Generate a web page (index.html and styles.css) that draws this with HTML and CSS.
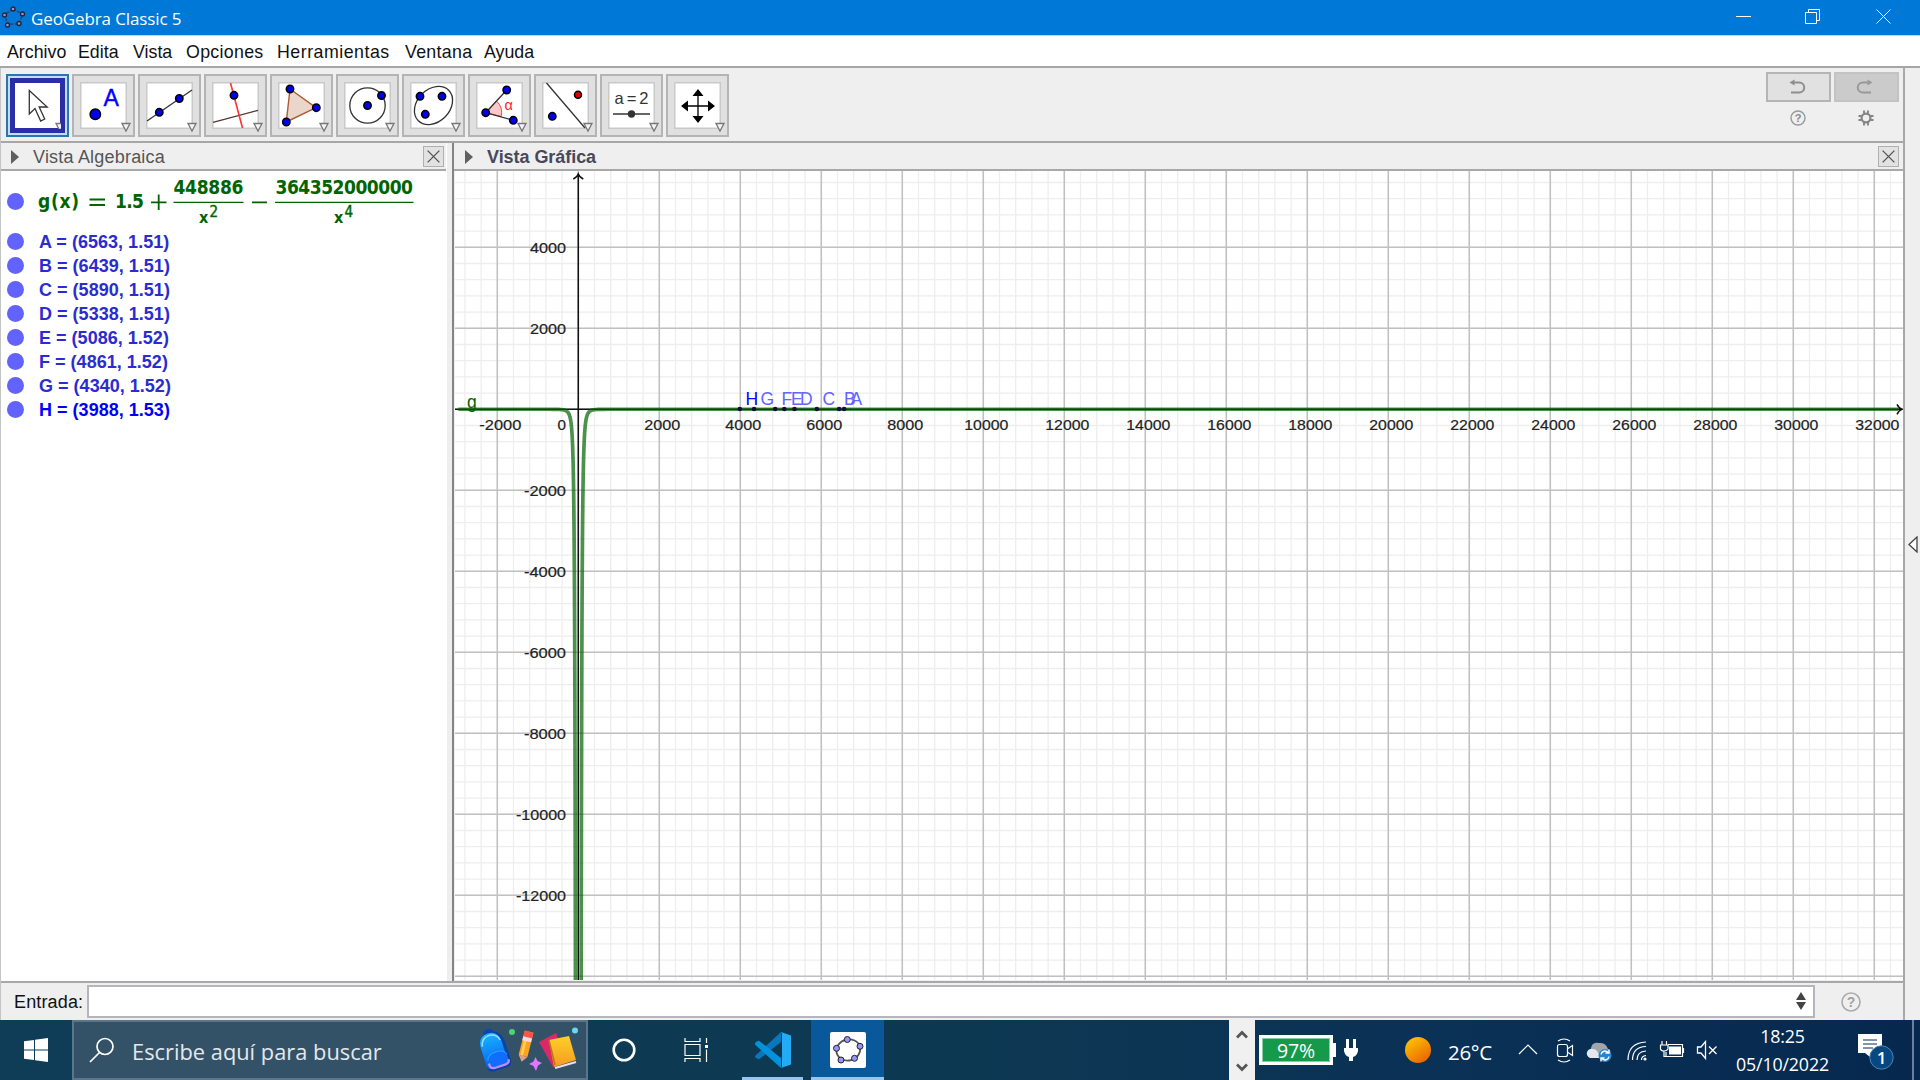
FILE: index.html
```html
<!DOCTYPE html>
<html lang="es">
<head>
<meta charset="utf-8">
<title>GeoGebra Classic 5</title>
<link rel="stylesheet" href="styles.css">
</head>
<body>
<header class="titlebar">
  <svg class="app-icon" width="24" height="24" viewBox="0 0 24 24"><path d="M11 4L20.500 9 17.500 18.500 6 19.500 2.500 10z" fill="none" stroke="#345" stroke-width="1.500" stroke-dasharray="3 1.500"/><g fill="#9a8ce8" stroke="#223" stroke-width="1.300"><circle cx="11" cy="4" r="2"/><circle cx="20.500" cy="9" r="2"/><circle cx="17" cy="18.500" r="2"/><circle cx="5.500" cy="20" r="2"/><circle cx="2.500" cy="10" r="2"/></g></svg>
  <span class="app-title">GeoGebra Classic 5</span>
  <svg class="window-controls" width="160" height="35" viewBox="0 0 160 35" fill="none" stroke="#fff" stroke-width="1"><path d="M0 16.500h15M69.500 12.500h11v11h-11zM72.500 12.500v-3h11v11h-3M140.500 9.500l14 14M154.500 9.500l-14 14"/></svg>
</header>
<nav class="menubar"><span>Archivo</span><span>Edita</span><span>Vista</span><span class="mid">Opciones</span><span class="wide">Herramientas</span><span class="mid">Ventana</span><span>Ayuda</span></nav>
<div class="window">
<main class="client">
  <section class="toolbar">
    <div class="tools">
      <div class="tool selected"><svg viewBox="0 0 47 47"><path d="M15.300 8.500V32l5.700-5.500 5.700 12.500 4-2-5.500-12h8z" fill="#fff" stroke="#333" stroke-width="1.300"/><path class="drop" d="M42 41.500h8l-4 7.500z"/></svg></div>
      <div class="tool"><svg viewBox="0 0 47 47"><circle class="pt" cx="15.300" cy="32.300" r="5.200"/><text x="23.500" y="24" font-size="23" fill="#00f" stroke="#00f" stroke-width=".4">A</text><path class="drop" d="M42 41.500h8l-4 7.500z"/></svg></div>
      <div class="tool"><svg viewBox="0 0 47 47"><path class="ln" d="M1 39L46 8"/><circle class="pt" cx="13.300" cy="30.300" r="3.700"/><circle class="pt" cx="33.300" cy="16.500" r="3.700"/><path class="drop" d="M42 41.500h8l-4 7.500z"/></svg></div>
      <div class="tool"><svg viewBox="0 0 47 47"><path d="M1 40.300L46 28.300" stroke="#533" stroke-width="1.300"/><path d="M18.500 1L30.500 46" stroke="#f33" stroke-width="1.600"/><circle class="pt" cx="22" cy="13.300" r="3.700"/><path class="drop" d="M42 41.500h8l-4 7.500z"/></svg></div>
      <div class="tool"><svg viewBox="0 0 47 47"><path d="M12 7L38 25.700 8.300 40z" fill="#ebd6cc" stroke="#b05a30" stroke-width="1.400"/><circle class="pt" cx="12" cy="7" r="3.700"/><circle class="pt" cx="38.300" cy="25.700" r="3.700"/><circle class="pt" cx="8.300" cy="40" r="3.700"/><path class="drop" d="M42 41.500h8l-4 7.500z"/></svg></div>
      <div class="tool"><svg viewBox="0 0 47 47"><circle class="ln" cx="23.500" cy="23.500" r="17.700"/><circle class="pt" cx="23.500" cy="23.500" r="3.700"/><circle class="pt" cx="37.500" cy="13.500" r="3.700"/><path class="drop" d="M42 41.500h8l-4 7.500z"/></svg></div>
      <div class="tool"><svg viewBox="0 0 47 47"><ellipse class="ln" cx="23.500" cy="23.500" rx="21.500" ry="16.300" transform="rotate(-45 23.500 23.500)"/><circle class="pt" cx="10" cy="14.300" r="3.700"/><circle class="pt" cx="32" cy="14.300" r="3.700"/><circle class="pt" cx="15.300" cy="32.300" r="3.700"/><path class="drop" d="M42 41.500h8l-4 7.500z"/></svg></div>
      <div class="tool"><svg viewBox="0 0 47 47"><path d="M9.700 30.700L20.500 19a16 16 0 0 1 4.700 15.500z" fill="#ffc8c8" stroke="#f44"/><path class="ln" d="M30.700 8l-21 22.700 27.600 7.600"/><circle class="pt" cx="9.700" cy="30.700" r="3.700"/><circle class="pt" cx="30.700" cy="8" r="3.700"/><circle class="pt" cx="37.300" cy="38.300" r="3.700"/><text x="28.500" y="27.500" font-size="14.500" fill="#f22">α</text><path class="drop" d="M42 41.500h8l-4 7.500z"/></svg></div>
      <div class="tool"><svg viewBox="0 0 47 47"><path class="ln" d="M4.500 1L43 46"/><circle class="pt red" cx="36" cy="12.700" r="3.500"/><circle class="pt" cx="10.300" cy="34.300" r="3.700"/><path class="drop" d="M42 41.500h8l-4 7.500z"/></svg></div>
      <div class="tool"><svg viewBox="0 0 47 47"><text x="6.500" y="21.500" font-size="16.500" fill="#333" textLength="34">a=2</text><path class="ln" d="M5 32h37"/><circle cx="23.500" cy="32" r="3.700" fill="#333"/><path class="drop" d="M42 41.500h8l-4 7.500z"/></svg></div>
      <div class="tool"><svg viewBox="0 0 47 47"><path d="M24 13v22M13 24h22" stroke="#000" stroke-width="1.300"/><path d="M24 7l5.500 7h-11zM24 41l5.500-7h-11zM7 24l7-5.500v11zM41 24l-7-5.500v11z"/><path class="drop" d="M42 41.500h8l-4 7.500z"/></svg></div>
    </div>
    <div class="side-tools">
      <div class="history"><svg width="64" height="29" viewBox="0 0 64 29"><path d="M27 9.500h6c7 0 7 10 0 10h-8" fill="none" stroke="#8e8e8e" stroke-width="2"/><path d="M23.500 9.500l5-3v6z" fill="#8e8e8e"/></svg></div>
      <div class="history off"><svg width="64" height="29" viewBox="0 0 64 29"><path d="M35 9.500h-6c-7 0-7 10 0 10h8" fill="none" stroke="#999" stroke-width="2"/><path d="M38.500 9.500l-5-3v6z" fill="#999"/></svg></div>
      <svg class="mini" width="18" height="18" viewBox="0 0 18 18"><circle cx="9" cy="9" r="7" fill="none" stroke="#999" stroke-width="1.400"/><text x="9" y="13" font-size="11" font-weight="bold" text-anchor="middle" fill="#888">?</text></svg>
      <svg class="mini" width="18" height="18" viewBox="0 0 18 18" fill="none" stroke="#858585"><circle cx="9" cy="9" r="4.400" stroke-width="2.200"/><path d="M7 1.500v3M11 1.500v3M7 13.500v3M11 13.500v3M1.500 7h3M1.500 11h3M13.500 7h3M13.500 11h3" stroke-width="1.900"/></svg>
    </div>
  </section>
  <section class="views">
    <aside class="algebra">
      <div class="view-head"><i class="tri"></i><span class="alg-title">Vista Algebraica</span><svg class="close" viewBox="0 0 21 21"><path d="M4 4l13 13M17 4L4 17"/></svg></div>
      <div class="alg-body">
        <div class="formula-row"><i class="dot"></i>
          <svg class="formula" width="380" height="58" viewBox="36 172 380 58">
            <text x="37" y="208" textLength="41">g(x)</text><path d="M88.500 199.500h15.500M88.500 205h15.500M150 202.300h15.500M157.700 194.500v15.500M251 202.300h15"/><text x="114" y="208" textLength="29">1.5</text>
            <text x="172.500" y="194" textLength="70">448886</text><path class="bar" d="M172.500 202.300h70M274 202.300h138.500"/>
            <text class="var" x="198" y="222.500" textLength="9">x</text><text class="sup" x="208.500" y="216.500">2</text>
            <text x="274.500" y="194" textLength="137.500">364352000000</text>
            <text class="var" x="333" y="222.500" textLength="9">x</text><text class="sup" x="343.500" y="216.500">4</text>
          </svg></div>
        <div class="row"><i class="dot"></i><span>A = (6563, 1.51)</span></div>
        <div class="row"><i class="dot"></i><span>B = (6439, 1.51)</span></div>
        <div class="row"><i class="dot"></i><span>C = (5890, 1.51)</span></div>
        <div class="row"><i class="dot"></i><span>D = (5338, 1.51)</span></div>
        <div class="row"><i class="dot"></i><span>E = (5086, 1.52)</span></div>
        <div class="row"><i class="dot"></i><span>F = (4861, 1.52)</span></div>
        <div class="row"><i class="dot"></i><span>G = (4340, 1.52)</span></div>
        <div class="row last"><i class="dot"></i><span>H = (3988, 1.53)</span></div>
      </div>
    </aside>
    <section class="graphics">
      <div class="view-head"><i class="tri"></i><b>Vista Gráfica</b><svg class="close" viewBox="0 0 21 21"><path d="M4 4l13 13M17 4L4 17"/></svg></div>
      <svg id="plot" class="plot" width="1448" height="809" viewBox="455 171 1448 809"></svg>
    </section>
  </section>
  <footer class="inputbar"><label>Entrada:</label><div class="field"><svg width="10" height="18" viewBox="0 0 10 18"><path d="M5 0l5 8H0zM5 18l5-8H0z" fill="#444"/></svg></div>
    <svg class="help" width="22" height="22" viewBox="0 0 22 22"><circle cx="11" cy="11" r="9" fill="none" stroke="#aaa" stroke-width="1.600"/><text x="11" y="16" font-size="14" font-weight="bold" text-anchor="middle" fill="#a2a2a2">?</text></svg></footer>
</main>
<aside class="strip"><svg width="10" height="17" viewBox="0 0 10 17"><path d="M9 1v15L1 8.500z" fill="#fff" stroke="#444" stroke-width="1.300"/></svg></aside>
</div>
<footer class="taskbar">
  <div class="start"><svg width="24" height="24" viewBox="0 0 24 24" fill="#fff"><path d="M0 3.300L10 1.900v9.600H0zM11 1.700L24 0v11.500H11zM0 12.500h10v9.600L0 20.700zM11 12.500h13V24l-13-1.700z"/></svg></div>
  <div class="search">
    <svg width="26" height="26" viewBox="0 0 26 26" fill="none" stroke="#fff" stroke-width="1.700"><circle cx="16" cy="9.500" r="8"/><path d="M10.500 15.500L1 25"/></svg>
    <span>Escribe aquí para buscar</span>
    <svg class="art" width="102" height="46" viewBox="478 1027 102 46">
      <defs><linearGradient id="pack" x2="0" y2="1"><stop stop-color="#18b5ff"/><stop offset="1" stop-color="#075eee"/></linearGradient><linearGradient id="book" x2="0" y2="1"><stop stop-color="#ffd02a"/><stop offset="1" stop-color="#f49a20"/></linearGradient></defs>
      <g transform="rotate(-18 496 1050)"><rect x="490" y="1028" width="10" height="8" rx="4" fill="#0647b5"/><path d="M483 1043q1-12 12-12t13 12v21q0 6-6 6h-13q-6 0-6-6z" fill="#0741a8"/><path d="M483 1043q1-11 11-11t11 11v19q0 5-5 5h-12q-5 0-5-5z" fill="url(#pack)"/><path d="M485 1043c1-11 17-12 19-1" fill="none" stroke="#9edbff" stroke-width="1.500"/><path d="M486 1067v-7q0-8 10-8t10 8v7z" fill="#116dff"/><path d="M486 1058q1-6 10-6t10 6" fill="none" stroke="#25a5ff"/><path d="M486 1061v2q0 4 5 4h10q5 0 5-4" stroke="#c28bff" stroke-width="2.200" fill="none"/></g>
      <circle cx="513" cy="1032" r="3" fill="#4bd675"/>
      <g transform="rotate(14 526 1046)"><rect x="522" y="1031" width="9" height="25" fill="#ffa31f"/><path d="M525 1036v20" stroke="#ffd05a" stroke-width="2.500"/><rect x="522" y="1031" width="9" height="7" rx="2" fill="#fa5548"/><path fill="#f0dce8" d="M522 1037h9v4h-9z"/><path fill="#e0a084" d="M522 1056h9l-4.500 6z"/></g>
      <path d="M536.500 1057l2 4 4.500 2-4 2.500-2 5.500-2.500-5-4.500-2 4.500-2.500z" fill="#e176ff"/>
      <path d="M540 1042l17-9 10 28-13 6z" fill="#da2868"/><path d="M550 1040l20-4 7 24-22 7z" fill="url(#book)"/><path d="M550 1040l6 25" stroke="#b77714" stroke-width="1.500"/><path d="M556 1068l21-6" stroke="#f2dbed" stroke-width="2.300"/><circle cx="576" cy="1030.500" r="3" fill="#67d8ee"/>
    </svg>
  </div>
  <div class="apps">
    <div class="app"><svg width="26" height="26" viewBox="0 0 26 26"><circle cx="13" cy="13" r="10.300" fill="none" stroke="#fff" stroke-width="2.600"/></svg></div>
    <div class="app"><svg width="26" height="26" viewBox="0 0 26 26" fill="none" stroke="#fff" stroke-width="1.200"><path d="M2 1v3.500h15V1M2 7.500h15v11H2zM2 25v-3.500h15V25M23.500 1v5M23.500 12.500V25"/><path d="M22 8h3v3h-3z" fill="#fff" stroke="none"/></svg></div>
    <div class="app open"><svg width="36" height="36" viewBox="0 0 36 36"><path d="M26 0L1 23q-2 2 0 3l2 1q1 .5 2-.5L26 10z" fill="#0877bd"/><path d="M5 9.500q-1-1-2-.5l-2 1q-2 1.500 0 3.500L26 36V26z" fill="#0092dc"/><path d="M26 0l10 3.500v29L26 36q1-.5 1-3V3q0-2-1-3z" fill="#25aaf4"/></svg></div>
    <div class="app active"><svg width="36" height="36" viewBox="0 0 36 36"><rect width="36" height="36" rx="2" fill="#fff"/><ellipse cx="18.300" cy="18" rx="12" ry="10.500" fill="none" stroke="#555" stroke-width="1.800" transform="rotate(-15 18 18)"/><g fill="#9595ff" stroke="#222" stroke-width="1"><circle cx="17.300" cy="7.500" r="3"/><circle cx="30" cy="14.300" r="3"/><circle cx="24.500" cy="26.300" r="3"/><circle cx="11" cy="28" r="3"/><circle cx="6.500" cy="16.300" r="3"/></g></svg></div>
  </div>
  <div class="scroller"><svg width="26" height="60" viewBox="0 0 26 60" fill="none" stroke="#555" stroke-width="2.700"><path d="M8 17.500l5-5 5 5M8 44.500l5 5 5-5"/></svg></div>
  <div class="battery">97%</div>
  <svg class="plug" width="14" height="24" viewBox="0 0 14 24" fill="#fff"><path d="M2 1h3v9H2zM9 1h3v9H9zM0 10h14v3q-1 5-5 6v4H5v-4q-4-1-5-6z"/></svg>
  <svg class="sun" width="26" height="26" viewBox="0 0 26 26"><defs><linearGradient id="sun" x2=".7" y2="1"><stop stop-color="#ffcf00"/><stop offset="1" stop-color="#eb6500"/></linearGradient></defs><circle cx="13" cy="13" r="13" fill="url(#sun)"/></svg>
  <span class="temp">26°C</span>
  <svg class="tray" width="204" height="30" viewBox="1516 1035 204 30" fill="none" stroke="#fff" stroke-width="1.200">
    <path d="M1519 1054l9-9 9 9"/>
    <rect x="1557.500" y="1044.500" width="10" height="12" rx="2"/><path d="M1568 1048.500l4.500-3v10l-4.500-3M1558 1041q6-4 12 0M1558 1060q6 4 12 0"/>
    <g stroke="none"><path d="M1591 1058a5 5 0 0 1 0-9 6 6 0 0 1 8-6 8 8 0 0 1 9 6 5 5 0 0 1 0 9z" fill="#a0a6ac"/><path d="M1590 1058a4.500 4.500 0 0 1 3-9q5 0 7 9z" fill="#e4e8ed"/><circle cx="1605" cy="1055.500" r="6.500" fill="#2584d0"/></g><path d="M1601 1054.500a4 4 0 0 1 7-2M1609 1049.500v3.500h-3.500M1609 1056.500a4 4 0 0 1-7 2M1601 1061.500V1058h3.500" stroke-width="1.400"/>
    <g><path d="M1628 1060q0-17 18-18M1632.500 1060q0-13 13.500-13.500M1637 1060q0-8.500 9-9M1641.500 1060q0-4 4.500-4.500"/><circle cx="1645" cy="1059" r="1" fill="#fff"/></g>
    <path d="M1668 1044.500h14.500v12H1666V1052M1683.500 1048v5M1662 1041v4M1666.500 1041v4M1660.500 1045h7.500v4q-1 2-4 2t-3.500-2zM1664 1051v5.500h2"/><path d="M1669 1046.500h12v8h-12z" fill="#fff" stroke="none"/>
    <path d="M1697.500 1047h3.500l4.500-5.500v17L1701 1053h-3.500zM1709 1046.500l7.500 7.500M1716.500 1046.500l-7.500 7.500" stroke-width="1.300"/>
  </svg>
  <div class="clock"><span>18:25</span><span>05/10/2022</span></div>
  <svg class="notice" width="38" height="38" viewBox="0 0 38 38"><path d="M1 1h24v19H13v4l-5-4H1z" fill="#fff"/><path d="M6 7h14M6 11h14M6 15h10" stroke="#082a50"/><circle cx="24.500" cy="24.500" r="11.700" fill="#064982" stroke="#5680a8"/><text x="24.500" y="30.500" text-anchor="middle" font-size="17" font-weight="600" fill="#fff">1</text></svg>
  <i class="peek"></i>
</footer>
<script src="plot.js"></script>
</body>
</html>
```
FILE: styles.css
```css
* { box-sizing: border-box; }
body { margin: 0; width: 1920px; height: 1080px; overflow: hidden; display: flex; flex-direction: column; background: #efefef; font-family: "Liberation Sans", Arial, sans-serif; color: #111; }
svg { display: block; flex: none; }
.titlebar { height: 35px; flex: none; background: #0078d7; color: #fff; display: flex; align-items: center; padding: 0 24px 0 2px; }
.app-icon { margin-bottom: 2px; }
.app-title { margin-left: 5px; font: 17px/35px "Open Sans", sans-serif; letter-spacing: -.12px; padding-top: 1px; }
.window-controls { margin-left: auto; }
.menubar { height: 33px; flex: none; background: #fff; border-top: 1px solid #b9d7ef; border-bottom: 2px solid #a6a6a6; display: grid; grid-template-columns: 71px 55px 53px 91px 128px 79px 80px; padding-left: 7px; font-size: 17.800px; line-height: 32px; }
.menubar .wide { letter-spacing: .5px; }
.menubar .mid { letter-spacing: .3px; }
.window { height: 952px; display: flex; border-left: 1px solid #c4c4c4; }
.client { width: 1904px; display: flex; flex-direction: column; border-right: 2px solid #a8a8a8; }
.strip { width: 15px; display: flex; align-items: center; padding-left: 3px; }
.toolbar { height: 75px; flex: none; border-bottom: 2px solid #a6a6a6; display: flex; justify-content: space-between; padding: 4px 4px 0 5px; }
.tools { display: flex; gap: 3px; padding-top: 2px; }
.tool { width: 63px; height: 63px; padding: 6px; border: 2px solid #b4b4b4; background: #e0e0e0; }
.tool svg { width: 47px; height: 47px; background: #fff; overflow: visible; box-shadow: inset 0 0 0 1.500px #c9c9c9; }
.tool.selected { border-color: #2a74b0; background: #c3def4; }
.tool.selected svg { outline: 4px solid #2c2ea8; box-shadow: inset 0 0 0 1px #2c2ea8; }
.ln { fill: none; stroke: #333; stroke-width: 1.300; }
.pt { fill: #00e; stroke: #000; stroke-width: 1.500; }
.pt.red { fill: #d00; }
.drop { fill: #f5f5f5; stroke: #777; stroke-width: 1.300; }
.side-tools { display: grid; grid-template-columns: 65px 65px; grid-template-rows: 29px 18px; gap: 8px 3px; justify-items: center; }
.mini { margin-left: -1px; }
.history { width: 65px; height: 30px; border: 2px solid #b5b5b5; background: #e1e1e1; }
.history svg { margin: -1px -2px; }
.history.off { background: #cbcbcb; border-color: #c3c3c3; }
.views { height: 838px; flex: none; display: flex; }
.algebra { width: 454px; margin-left: -1px; background: #fff; border-right: 2px solid #848484; box-shadow: inset -5px 0 #eee; border-left: 1px solid #c4c4c4; }
.graphics { width: 1449px; }
.view-head { height: 28px; display: flex; align-items: center; background: #efefef; border-bottom: 2px solid #a8a8a8; padding: 1px 4px 0 11px; font-size: 18px; line-height: 26px; color: #555; }
.algebra .view-head { width: 445px; padding-left: 10px; }
.tri { border-left: 8px solid #606060; border-top: 7px solid transparent; border-bottom: 7px solid transparent; }
.alg-title { margin-left: 14px; letter-spacing: .2px; padding-top: 1px; }
.view-head b { margin-left: 14px; padding-top: 1px; color: #48485a; font-size: 18px; letter-spacing: -.05px; }
.close { margin-left: auto; width: 21px; height: 21px; border: 1.500px solid #b0b0b0; background: #e2e2e2; fill: none; stroke: #555; stroke-width: 1.500; }
.algebra .close { margin-right: -2px; }
.alg-body { padding: 1px 0 0 6px; }
.dot { width: 17px; height: 17px; flex: none; border-radius: 50%; background: #6262ff; }
.formula-row { height: 57px; display: flex; align-items: center; gap: 12.500px; padding-top: 1px; }
.formula { font: bold 19px "DejaVu Sans Condensed", "DejaVu Sans", sans-serif; font-stretch: condensed; fill: #006400; }
.formula path { fill: none; stroke: #006400; stroke-width: 1.800; }
.formula .bar { stroke-width: 1.200; }
.formula .var { font-size: 16px; }
.formula .sup { font-size: 15px; font-weight: normal; stroke: #006400; stroke-width: .4; }
.row { height: 24px; display: flex; align-items: center; gap: 15px; font-size: 18px; font-weight: bold; color: #2b2bd2; letter-spacing: .02px; }
.row span { padding-top: 2px; }
.row.last { color: #0000fa; }
.plot { background: #fff; margin-left: 1px; }
.plot .minor { stroke: #eeeeee; stroke-width: 1.300; }
.plot .major { stroke: #c0c0c0; stroke-width: 1.500; }
.plot .axis { stroke: #111; stroke-width: 1.500; fill: none; }
.plot .curve { stroke: #006400; stroke-opacity: .7; stroke-width: 3.700; fill: none; stroke-linejoin: round; }
.plot .tick { font-size: 14.500px; fill: #222; stroke: #222; stroke-width: .2; }
.plot .label { font-size: 17.500px; fill: #6464ff; }
.inputbar { height: 39px; display: flex; align-items: center; border-top: 2px solid #a8a8a8; padding-left: 13px; font-size: 18px; }
.inputbar label { width: 72.500px; letter-spacing: .15px; padding-top: 2px; }
.field { width: 1728px; height: 33px; margin-top: -1px; background: #fff; border: 2px solid #b5b6bd; display: flex; align-items: center; justify-content: flex-end; padding-right: 7px; }
.help { margin-left: 25px; }
.taskbar { height: 60px; flex: none; background: linear-gradient(90deg, #0f3d58, #0d3852 50%, #0a3156 75%, #06284f); color: #fff; display: flex; align-items: center; font-family: "Open Sans", sans-serif; }
.start { width: 72px; padding-left: 24px; }
.search { width: 516px; height: 60px; background: #345267; border: 2px solid #5b7589; display: flex; align-items: center; padding-left: 15px; }
.search span { width: 345px; margin-left: 17px; font-size: 21.800px; letter-spacing: .02px; color: #e3e8ec; padding-top: 2px; white-space: nowrap; }
.apps { display: flex; height: 60px; padding-left: 5px; }
.app { width: 62px; display: grid; place-items: center; border-bottom: 3px solid transparent; padding-top: 3px; }
.app:nth-child(2) { margin-left: 10px; width: 61px; }
.app:nth-child(3) { margin-left: 16px; width: 61px; border-color: #97c5ee; }
.app:nth-child(4) { margin-left: 8px; width: 73px; border-color: #97c5ee; background: #09589a; }
.scroller { width: 26px; margin-left: 345px; background: #f0f0f0; }
.battery { position: relative; margin-left: 4px; width: 74px; height: 30px; border: 3px solid #fff; background: #149a4a; box-shadow: inset 0 0 0 1px #8ccca5; text-align: center; font-size: 19.500px; line-height: 26px; letter-spacing: -.2px; }
.battery::after { content: ""; position: absolute; right: -6px; top: 5px; width: 3px; height: 14px; background: #fff; }
.plug { margin-left: 11px; }
.sun { margin-left: 47px; }
.temp { width: 67px; padding-left: 17px; font-size: 20.500px; letter-spacing: -.3px; padding-top: 3px; }
.tray { margin-left: 18px; margin-right: 12px; }
.clock { width: 101px; display: flex; flex-direction: column; align-items: center; font-size: 17.800px; line-height: 28px; letter-spacing: -.15px; }
.notice { margin: 3px 0 0 24px; }
.peek { width: 2px; height: 60px; margin-left: 17px; background: #6d809a; }
```
FILE: plot.js
```js
const svg = document.getElementById('plot');
const X0 = 578.3, Y0 = 409.3, UNIT = 81 / 2000;
const NS = 'http://www.w3.org/2000/svg';

function add(tag, attrs, text) {
  const el = document.createElementNS(NS, tag);
  for (const k in attrs) el.setAttribute(k, attrs[k]);
  if (text) el.textContent = text;
  svg.appendChild(el);
}

function grid(step, cls) {
  let d = '';
  for (let x = X0 + Math.ceil((455 - X0) / step) * step; x < 1903; x += step) d += `M${x} 171V980`;
  for (let y = Y0 + Math.ceil((171 - Y0) / step) * step; y < 980; y += step) d += `M455 ${y}H1903`;
  add('path', { d, class: cls });
}
grid(16.2, 'minor');
grid(81, 'major');

// axes with open arrow heads
add('path', { class: 'axis', d: `M455 ${Y0}H1902M1897 404.300Q1899 408.300 1902 ${Y0}Q1899 410.300 1897 414.300` });
add('path', { class: 'axis', d: `M${X0} 980V174M573.300 179Q577.300 177 ${X0} 174Q579.300 177 583.300 179` });

// g(x) = 1.5 + 448886/x^2 - 364352000000/x^4
const g = x => 1.5 + 448886 / (x * x) - 364352000000 / x ** 4;
for (const side of [-1, 1]) {
  let d = '';
  const end = side < 0 ? 124 : 1324;
  for (let p = 2.85; p <= end; p += p < 20 ? 0.1 : 5) {
    d += `${d ? 'L' : 'M'}${X0 + side * p} ${Y0 - g(p / UNIT) * UNIT}`;
  }
  add('path', { class: 'curve', d });
}

const widths = { 1: 8.5, 4: 36, 5: 44 };
function tick(value, x, y, anchor) {
  const s = String(value);
  const w = widths[s.replace('-', '').length] + (value < 0 ? 6 : 0);
  add('text', { class: 'tick', x, y, 'text-anchor': anchor, textLength: w, lengthAdjust: 'spacingAndGlyphs' }, s);
}
for (let v = -2000; v <= 32000; v += 2000) if (v) tick(v, X0 + v * UNIT + 3, 429.5, 'middle');
for (let v = -12000; v <= 4000; v += 2000) if (v) tick(v, 566, Y0 - v * UNIT + 5.5, 'end');
tick(0, 566, 429.5, 'end');

const points = [['A', 6563, 850.5], ['B', 6439, 844], ['C', 5890, 822.5], ['D', 5338, 800],
  ['E', 5086, 791], ['F', 4861, 781.5], ['G', 4340, 760.5], ['H', 3988, 745.5]];
for (const [name, x, lx] of points) {
  add('circle', { cx: X0 + x * UNIT, cy: Y0 - 0.3, r: 2.3, fill: '#111136' });
  add('text', { class: 'label', x: lx, y: 405, style: name === 'H' ? 'fill:#00f' : '' }, name);
}
add('text', { class: 'label', x: 467, y: 408, style: 'fill:#006400' }, 'g');
```
